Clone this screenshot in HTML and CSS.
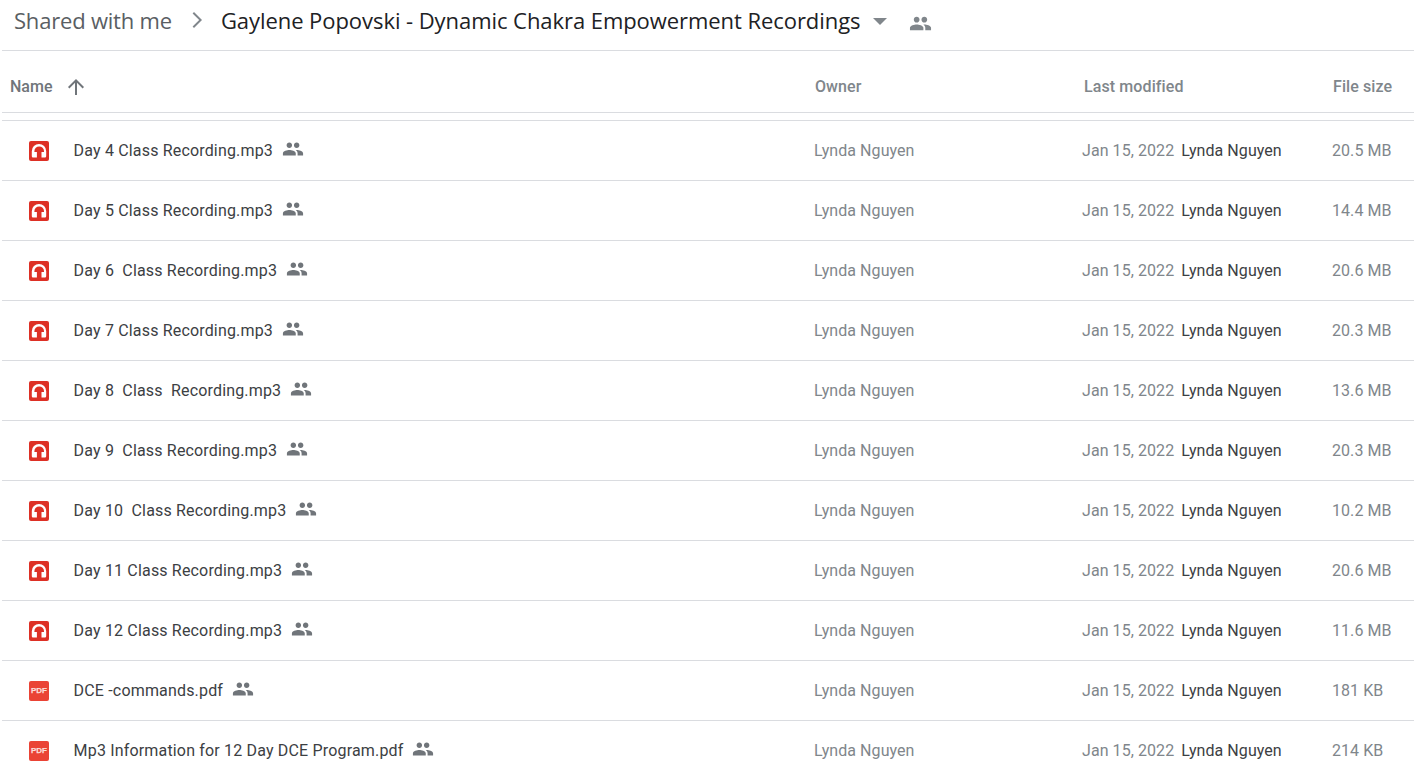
FILE: index.html
```html
<!DOCTYPE html>
<html lang="en">
<head>
<meta charset="utf-8">
<title>Gaylene Popovski - Dynamic Chakra Empowerment Recordings</title>
<link rel="stylesheet" href="styles.css">
</head>
<body>
<svg class="defs" width="0" height="0" aria-hidden="true">
  <symbol id="people" viewBox="0 0 24 24"><path d="M16 11c1.66 0 2.99-1.34 2.99-3S17.66 5 16 5s-3 1.34-3 3 1.34 3 3 3zm-8 0c1.66 0 2.99-1.34 2.99-3S9.66 5 8 5 5 6.34 5 8s1.34 3 3 3zm0 2c-2.33 0-7 1.17-7 3.5V19h14v-2.5C15 14.17 10.33 13 8 13zm8 0c-.29 0-.62.02-.97.05 1.16.84 1.97 1.97 1.97 3.45V19h6v-2.5c0-2.33-4.67-3.5-7-3.5z"/></symbol>
  <symbol id="audio" viewBox="0 0 20 20"><rect width="20" height="20" rx="2" fill="#dd3025"/><path d="M2.8 15.2V10.2a7.2 7.2 0 0 1 14.4 0v5a1.2 1.2 0 0 1-1.2 1.2h-3.5v-5.4h2.5v-.8a4.8 4.8 0 0 0-9.6 0v.8h2.5v5.4H4a1.2 1.2 0 0 1-1.2-1.2z" fill="#fff"/></symbol>
</svg>
<header class="crumbs">
  <span class="crumb-root">Shared with me</span>
  <svg class="crumb-sep" viewBox="0 0 24 24"><path d="M8.6 5.4 10 4l8 8-8 8-1.4-1.4 6.6-6.6z"/></svg>
  <span class="crumb-current">Gaylene Popovski - Dynamic Chakra Empowerment Recordings</span>
  <span class="crumb-caret"></span>
  <svg class="crumb-people"><use href="#people"/></svg>
</header>
<div class="head-row">
  <div class="col-name head-name"><span>Name</span><svg class="sort" viewBox="0 0 24 24"><path d="M4 12l1.41 1.41L11 7.83V20h2V7.83l5.58 5.59L20 12l-8-8z"/></svg></div>
  <div class="col-owner">Owner</div>
  <div class="col-modified">Last modified</div>
  <div class="col-size">File size</div>
</div>
<div class="gap"></div>
<main class="list">
  <div class="row"><div class="col-name"><svg class="ficon"><use href="#audio"/></svg><span class="fname">Day 4 Class Recording.mp3</span><svg class="shared"><use href="#people"/></svg></div><div class="col-owner">Lynda Nguyen</div><div class="col-modified"><span>Jan 15, 2022</span><span class="by">Lynda Nguyen</span></div><div class="col-size">20.5 MB</div></div>
  <div class="row"><div class="col-name"><svg class="ficon"><use href="#audio"/></svg><span class="fname">Day 5 Class Recording.mp3</span><svg class="shared"><use href="#people"/></svg></div><div class="col-owner">Lynda Nguyen</div><div class="col-modified"><span>Jan 15, 2022</span><span class="by">Lynda Nguyen</span></div><div class="col-size">14.4 MB</div></div>
  <div class="row"><div class="col-name"><svg class="ficon"><use href="#audio"/></svg><span class="fname">Day 6  Class Recording.mp3</span><svg class="shared"><use href="#people"/></svg></div><div class="col-owner">Lynda Nguyen</div><div class="col-modified"><span>Jan 15, 2022</span><span class="by">Lynda Nguyen</span></div><div class="col-size">20.6 MB</div></div>
  <div class="row"><div class="col-name"><svg class="ficon"><use href="#audio"/></svg><span class="fname">Day 7 Class Recording.mp3</span><svg class="shared"><use href="#people"/></svg></div><div class="col-owner">Lynda Nguyen</div><div class="col-modified"><span>Jan 15, 2022</span><span class="by">Lynda Nguyen</span></div><div class="col-size">20.3 MB</div></div>
  <div class="row"><div class="col-name"><svg class="ficon"><use href="#audio"/></svg><span class="fname">Day 8  Class  Recording.mp3</span><svg class="shared"><use href="#people"/></svg></div><div class="col-owner">Lynda Nguyen</div><div class="col-modified"><span>Jan 15, 2022</span><span class="by">Lynda Nguyen</span></div><div class="col-size">13.6 MB</div></div>
  <div class="row"><div class="col-name"><svg class="ficon"><use href="#audio"/></svg><span class="fname">Day 9  Class Recording.mp3</span><svg class="shared"><use href="#people"/></svg></div><div class="col-owner">Lynda Nguyen</div><div class="col-modified"><span>Jan 15, 2022</span><span class="by">Lynda Nguyen</span></div><div class="col-size">20.3 MB</div></div>
  <div class="row"><div class="col-name"><svg class="ficon"><use href="#audio"/></svg><span class="fname">Day 10  Class Recording.mp3</span><svg class="shared"><use href="#people"/></svg></div><div class="col-owner">Lynda Nguyen</div><div class="col-modified"><span>Jan 15, 2022</span><span class="by">Lynda Nguyen</span></div><div class="col-size">10.2 MB</div></div>
  <div class="row"><div class="col-name"><svg class="ficon"><use href="#audio"/></svg><span class="fname">Day 11 Class Recording.mp3</span><svg class="shared"><use href="#people"/></svg></div><div class="col-owner">Lynda Nguyen</div><div class="col-modified"><span>Jan 15, 2022</span><span class="by">Lynda Nguyen</span></div><div class="col-size">20.6 MB</div></div>
  <div class="row"><div class="col-name"><svg class="ficon"><use href="#audio"/></svg><span class="fname">Day 12 Class Recording.mp3</span><svg class="shared"><use href="#people"/></svg></div><div class="col-owner">Lynda Nguyen</div><div class="col-modified"><span>Jan 15, 2022</span><span class="by">Lynda Nguyen</span></div><div class="col-size">11.6 MB</div></div>
  <div class="row"><div class="col-name"><span class="ficon ficon-pdf">PDF</span><span class="fname">DCE -commands.pdf</span><svg class="shared"><use href="#people"/></svg></div><div class="col-owner">Lynda Nguyen</div><div class="col-modified"><span>Jan 15, 2022</span><span class="by">Lynda Nguyen</span></div><div class="col-size">181 KB</div></div>
  <div class="row"><div class="col-name"><span class="ficon ficon-pdf">PDF</span><span class="fname">Mp3 Information for 12 Day DCE Program.pdf</span><svg class="shared"><use href="#people"/></svg></div><div class="col-owner">Lynda Nguyen</div><div class="col-modified"><span>Jan 15, 2022</span><span class="by">Lynda Nguyen</span></div><div class="col-size">214 KB</div></div>
</main>
</body>
</html>
```
FILE: styles.css
```css
* { box-sizing: border-box; }
html, body { margin: 0; height: 100%; overflow: hidden; background: #fff; }
body { padding-left: 2px; font-family: Roboto, "Liberation Sans", sans-serif; color: #5f6368; }
.defs { position: absolute; }

.crumbs {
  display: flex; align-items: center;
  height: 51px; padding: 0 0 10px 12px;
  border-bottom: 1px solid #dadce0;
  font-family: "Open Sans", sans-serif;
}
.crumb-root { font-size: 22px; color: #5a5e63; letter-spacing: -.2px; }
.crumb-sep { width: 24px; height: 24px; fill: #80868b; margin: 0 13px 0 12px; flex: none; }
.crumb-current { font-size: 22px; color: #202124; letter-spacing: -.06px; white-space: nowrap; }
.crumb-caret { flex: none; width: 0; height: 0; margin: 2px 0 0 12px; border: 7px solid transparent; border-top: 7px solid #80868b; border-bottom: 0; }
.crumb-people { flex: none; width: 23px; height: 23px; fill: #80868b; margin: 6px 0 0 22px; }

.head-row, .row {
  display: grid;
  grid-template-columns: 812px 268px 250px 82px;
  align-items: center;
}
.head-row {
  height: 62px;
  padding-top: 10px;
  border-bottom: 1px solid #dadce0;
  font-size: 16px; font-weight: 500; color: #80868b;
  letter-spacing: .1px;
}
.head-row .col-owner, .head-row .col-size { padding-left: 1px; }
.head-row .col-modified { padding-left: 2px; }
.head-name { padding-left: 8px; color: #70757a; letter-spacing: 0; }
.sort { width: 24px; height: 24px; fill: #70757a; margin-left: 11.5px; }
.gap { height: 7px; }

.list { border-top: 1px solid #dadce0; }
.row {
  height: 60px;
  border-bottom: 1px solid #dadce0;
  font-size: 16px; color: #80868b;
  letter-spacing: .07px;
}
.col-name { display: flex; align-items: center; white-space: pre; }
.ficon { width: 20px; height: 20px; margin-left: 27px; flex: none; }
.ficon-pdf {
  display: flex; align-items: center; justify-content: center;
  border-radius: 2px; background: #ea4335; color: #fbdcd9;
  font: 700 8px "Liberation Sans", sans-serif; letter-spacing: 0;
  -webkit-text-stroke: .25px #fbdcd9;
}
.fname { margin-left: 24.6px; color: #3c4043; letter-spacing: .17px; }
.shared { width: 22px; height: 22px; fill: #70757a; margin-left: 8.5px; margin-top: -3px; flex: none; }
.by { margin-left: 7px; color: #3c4043; }
```
